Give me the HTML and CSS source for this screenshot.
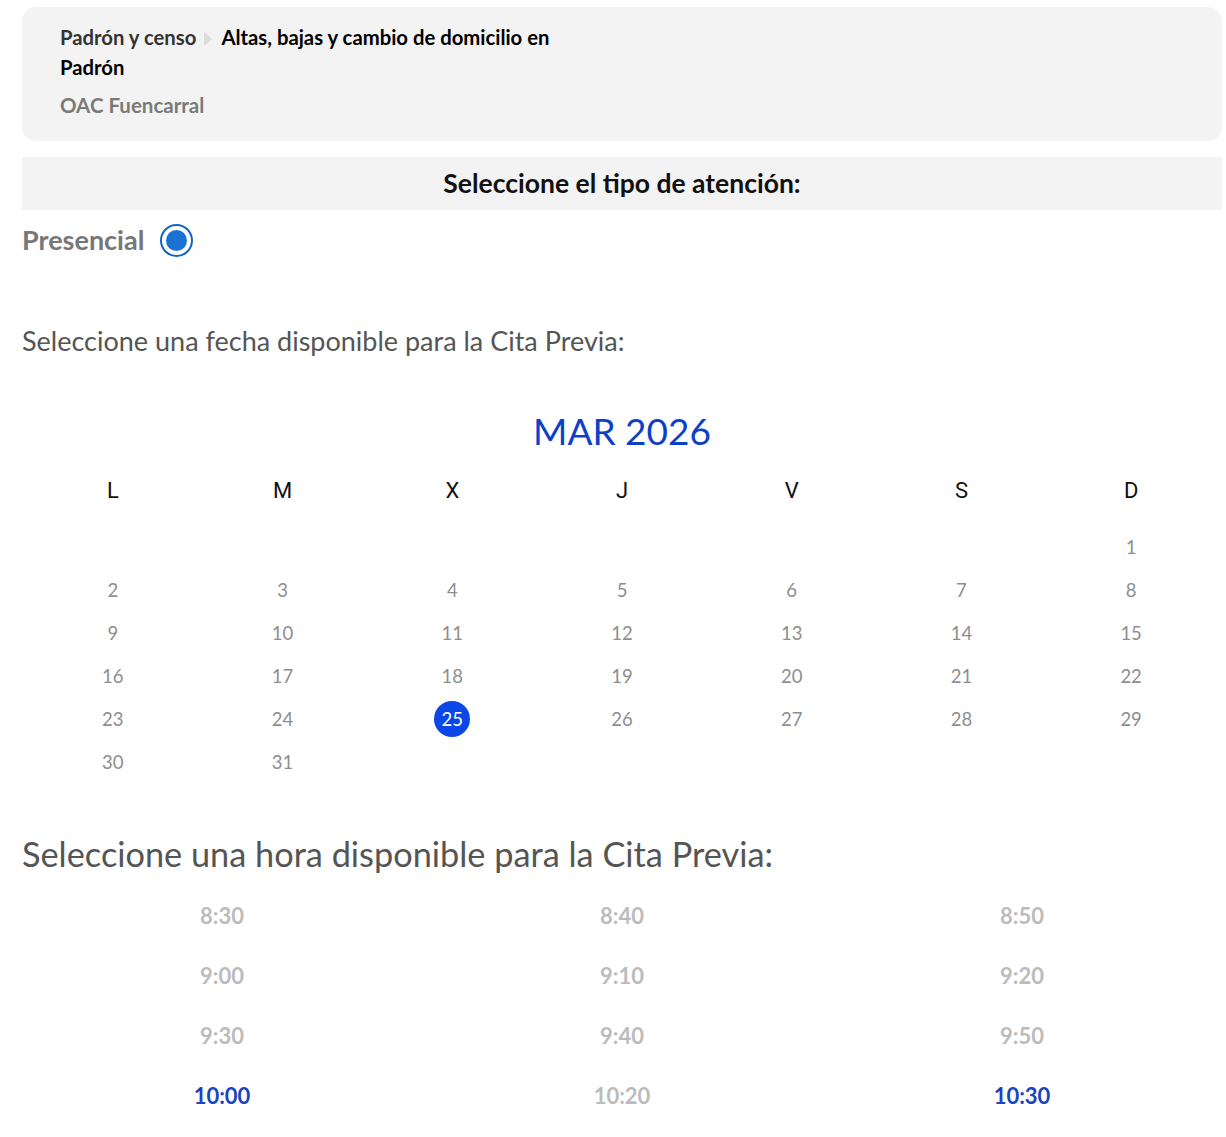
FILE: index.html
```html
<!DOCTYPE html>
<html lang="es">
<head>
<meta charset="utf-8">
<title>Cita Previa</title>
<link rel="stylesheet" href="styles.css">
</head>
<body>
<div class="page">
  <div class="header-box">
    <div class="breadcrumb"><span class="crumb-parent">Padrón y censo</span><span class="crumb-sep"></span><span class="crumb-current">Altas, bajas y cambio de domicilio en</span> <span class="crumb-current">Padrón</span></div>
    <div class="office">OAC Fuencarral</div>
  </div>

  <div class="title-bar">Seleccione el tipo de atención:</div>

  <div class="attention-row">
    <span class="attention-label">Presencial</span>
    <span class="radio"><span class="radio-dot"></span></span>
  </div>

  <p class="date-prompt">Seleccione una fecha disponible para la Cita Previa:</p>

  <div class="month">MAR 2026</div>

  <div class="calendar">
    <div class="dow">L</div><div class="dow">M</div><div class="dow">X</div><div class="dow">J</div><div class="dow">V</div><div class="dow">S</div><div class="dow">D</div>
    <div class="day first-row"></div><div class="day first-row"></div><div class="day first-row"></div><div class="day first-row"></div><div class="day first-row"></div><div class="day first-row"></div><div class="day first-row">1</div>
    <div class="day">2</div><div class="day">3</div><div class="day">4</div><div class="day">5</div><div class="day">6</div><div class="day">7</div><div class="day">8</div>
    <div class="day">9</div><div class="day">10</div><div class="day">11</div><div class="day">12</div><div class="day">13</div><div class="day">14</div><div class="day">15</div>
    <div class="day">16</div><div class="day">17</div><div class="day">18</div><div class="day">19</div><div class="day">20</div><div class="day">21</div><div class="day">22</div>
    <div class="day">23</div><div class="day">24</div><div class="day"><span class="selected">25</span></div><div class="day">26</div><div class="day">27</div><div class="day">28</div><div class="day">29</div>
    <div class="day">30</div><div class="day">31</div>
  </div>

  <h2 class="hour-prompt">Seleccione una hora disponible para la Cita Previa:</h2>

  <div class="times">
    <div class="time">8:30</div><div class="time">8:40</div><div class="time">8:50</div>
    <div class="time">9:00</div><div class="time">9:10</div><div class="time">9:20</div>
    <div class="time">9:30</div><div class="time">9:40</div><div class="time">9:50</div>
    <div class="time available">10:00</div><div class="time">10:20</div><div class="time available">10:30</div>
  </div>
</div>
</body>
</html>
```

FILE: styles.css
```css
html, body {
  margin: 0;
  padding: 0;
  background: #ffffff;
}

body {
  font-family: Lato, "Liberation Sans", sans-serif;
  color: #333;
}

.page {
  width: 1200px;
  margin-left: 22px;
  padding-top: 7px;
}

.header-box {
  background: #f3f3f3;
  border-radius: 14px;
  padding: 15px 38px 20px;
  height: 134px;
  box-sizing: border-box;
}

.breadcrumb {
  width: 520px;
  font-size: 20.3px;
  line-height: 30px;
  letter-spacing: 0;
  font-weight: 700;
  color: #000;
}

.crumb-parent {
  color: #333;
}

.crumb-current {
  color: #000;
}

.crumb-sep {
  display: inline-block;
  width: 0;
  height: 0;
  border-top: 7px solid transparent;
  border-bottom: 7px solid transparent;
  border-left: 8px solid #dcdcdc;
  margin: 0 9px 0 8px;
  vertical-align: -1px;
}

.office {
  margin-top: 11px;
  font-size: 20.5px;
  line-height: 24px;
  letter-spacing: 0;
  font-weight: 700;
  color: #7a7a7a;
}

.title-bar {
  margin-top: 16px;
  height: 53px;
  line-height: 53px;
  background: #f3f3f3;
  text-align: center;
  font-size: 26.5px;
  font-weight: 700;
  color: #111;
}

.attention-row {
  display: flex;
  align-items: center;
  height: 58px;
}

.attention-label {
  font-size: 27px;
  font-weight: 700;
  color: #777;
}

.radio {
  margin-left: 16px;
  width: 29px;
  height: 29px;
  border: 2px solid #1565c0;
  border-radius: 50%;
  display: flex;
  align-items: center;
  justify-content: center;
  margin-top: 3px;
}

.radio-dot {
  width: 21px;
  height: 21px;
  border-radius: 50%;
  background: #1a73d4;
}

.date-prompt {
  margin: 53px 0 0;
  font-size: 27px;
  line-height: 40px;
  color: #555;
}

.month {
  margin-top: 45px;
  text-align: center;
  font-size: 37px;
  line-height: 50px;
  color: #0d40c8;
}

.calendar {
  margin: 13px 6px 0;
  display: grid;
  grid-template-columns: repeat(7, 1fr);
  grid-template-rows: 43px 56px;
  grid-auto-rows: 43px;
  font-family: Roboto, Lato, sans-serif;
}

.dow {
  display: flex;
  align-items: center;
  justify-content: center;
  font-size: 22px;
  color: #111;
}

.day {
  display: flex;
  align-items: center;
  justify-content: center;
  font-size: 18.5px;
  color: #8e8e8e;
  font-family: Lato, sans-serif;
}

.day.first-row {
  padding-top: 13px;
}

.selected {
  width: 36px;
  height: 36px;
  border-radius: 50%;
  background: #0a47e6;
  color: #fff;
  display: flex;
  align-items: center;
  justify-content: center;
}

.hour-prompt {
  margin: 46px 0 0;
  font-size: 34.3px;
  line-height: 50px;
  font-weight: 400;
  color: #555;
}

.times {
  margin-top: 6px;
  display: grid;
  grid-template-columns: repeat(3, 1fr);
  grid-auto-rows: 60px;
}

.time {
  display: flex;
  align-items: center;
  justify-content: center;
  font-size: 22px;
  font-weight: 700;
  color: #bcbcbc;
}

.time.available {
  color: #1a44c4;
}
```
